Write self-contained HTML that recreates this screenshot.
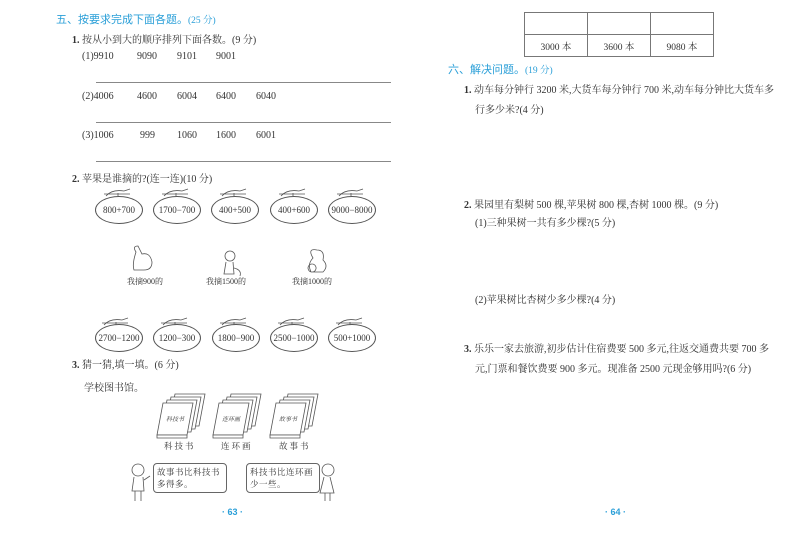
<!DOCTYPE html>
<html><head><meta charset="utf-8"><style>
body{margin:0;width:800px;height:534px;background:#fff;position:relative;overflow:hidden;font-family:"Liberation Serif","Noto Serif CJK SC",serif;color:#333;font-size:10px}
.a{position:absolute;white-space:nowrap}
.h{color:#2a9fd8;font-family:"Liberation Sans","Noto Sans CJK SC",sans-serif;font-size:11px}
.h span{font-family:"Liberation Serif","Noto Serif CJK SC",serif;font-size:9.5px}
.ln{position:absolute;height:1px;background:#888}
.ov{position:absolute;border:1px solid #555;border-radius:50%;width:46px;height:26px;text-align:center;line-height:26px;font-size:9px}
table{border-collapse:collapse}
td{border:1px solid #777;width:60px;height:19px;text-align:center;font-size:9.5px}
.bub{position:absolute;border:1px solid #666;border-radius:4px;font-size:8.5px;line-height:12px;padding:2px 3px;letter-spacing:0.5px;white-space:nowrap;background:#fff}
.pg{color:#2a9fd8;font-family:"Liberation Sans",sans-serif;font-weight:bold;font-size:9px}
</style></head><body>
<div class="a h" style="left:56px;top:11px">五、按要求完成下面各题。<span>(25 分)</span></div>
<div class="a" style="left:72px;top:31px"><b>1.</b> 按从小到大的顺序排列下面各数。(9 分)</div>
<div class="a" style="left:82px;top:51px">(1)9910</div><div class="a" style="left:137px;top:51px">9090</div><div class="a" style="left:177px;top:51px">9101</div><div class="a" style="left:216px;top:51px">9001</div>
<div class="ln" style="left:96px;top:82px;width:295px"></div>
<div class="a" style="left:82px;top:91px">(2)4006</div><div class="a" style="left:137px;top:91px">4600</div><div class="a" style="left:177px;top:91px">6004</div><div class="a" style="left:216px;top:91px">6400</div><div class="a" style="left:256px;top:91px">6040</div>
<div class="ln" style="left:96px;top:122px;width:295px"></div>
<div class="a" style="left:82px;top:130px">(3)1006</div><div class="a" style="left:140px;top:130px">999</div><div class="a" style="left:177px;top:130px">1060</div><div class="a" style="left:216px;top:130px">1600</div><div class="a" style="left:256px;top:130px">6001</div>
<div class="ln" style="left:96px;top:161px;width:295px"></div>
<div class="a" style="left:72px;top:170px"><b>2.</b> 苹果是谁摘的?(连一连)(10 分)</div>

<div class="ov" style="left:95px;top:196px">800+700</div>
<div class="ov" style="left:153px;top:196px">1700−700</div>
<div class="ov" style="left:211px;top:196px">400+500</div>
<div class="ov" style="left:270px;top:196px">400+600</div>
<div class="ov" style="left:328px;top:196px">9000−8000</div>
<svg class="a" style="left:0;top:0" width="400" height="534">
<g fill="none" stroke="#555" stroke-width="0.8">
<path id="b" d="M106 196 q6-7 18-5 l6-2 M104 194 l26 0 M118 196 l0 -3"/>
<use href="#b" x="58"/><use href="#b" x="116"/><use href="#b" x="175"/><use href="#b" x="233"/>
<use href="#b" x="-2" y="129"/><use href="#b" x="57" y="129"/><use href="#b" x="116" y="129"/><use href="#b" x="174" y="129"/><use href="#b" x="232" y="129"/>
<path d="M136 252 q-4-6 2-6 l4 8 q8-2 10 8 q0 8-8 8 l-10 0 q-2-6 2-18z"/>
<circle cx="230" cy="256" r="5"/><path d="M226 262 l-2 12 l10 0 l-1-12 M234 268 q8 2 6 8"/>
<path d="M313 258 q-6-10 4-8 q8 0 6 10 q6 6 0 12 l-12 0 q-4-8 2-14z M312 264 a4 4 0 1 0 0.1 0"/>
<g id="bk" fill="#fff">
<path d="M175 394 l30 -0 l-6 32 l-30 0z"/><path d="M171 397 l30 0 l-6 32 l-30 0z"/><path d="M167 400 l30 0 l-6 32 l-30 0z"/>
<path d="M163 403 l30 0 l-6 32 l-30 0z"/><path d="M157 435 l30 0 l0 3 l-30 0z"/>
</g>
<use href="#bk" x="56"/><use href="#bk" x="113"/>
<circle cx="138" cy="470" r="6"/><path d="M134 477 l-2 14 l12 0 l-1-14 M135 491 l0 10 M141 491 l0 10 M144 480 l6-4"/>
<circle cx="328" cy="470" r="6"/><path d="M324 477 l-4 16 l14 0 l-4-16 M325 493 l0 8 M330 493 l0 8"/>
</g></svg>
<div class="a" style="left:166px;top:414px;font-size:6px;font-style:italic">科技书</div>
<div class="a" style="left:222px;top:414px;font-size:6px;font-style:italic">连环画</div>
<div class="a" style="left:279px;top:414px;font-size:6px;font-style:italic">故事书</div>
<div class="a" style="left:127px;top:276px;font-size:8px">我摘900的</div>
<div class="a" style="left:206px;top:276px;font-size:8px">我摘1500的</div>
<div class="a" style="left:292px;top:276px;font-size:8px">我摘1000的</div>

<div class="ov" style="left:95px;top:324px">2700−1200</div>
<div class="ov" style="left:153px;top:324px">1200−300</div>
<div class="ov" style="left:212px;top:324px">1800−900</div>
<div class="ov" style="left:270px;top:324px">2500−1000</div>
<div class="ov" style="left:328px;top:324px">500+1000</div>
<div class="a" style="left:72px;top:356px"><b>3.</b> 猜一猜,填一填。(6 分)</div>
<div class="a" style="left:84px;top:379px">学校图书馆。</div>
<div class="a" style="left:164px;top:440px;font-size:8.5px;letter-spacing:2px">科技书</div>
<div class="a" style="left:221px;top:440px;font-size:8.5px;letter-spacing:2px">连环画</div>
<div class="a" style="left:279px;top:440px;font-size:8.5px;letter-spacing:2px">故事书</div>
<div class="bub" style="left:153px;top:463px;width:66px">故事书比科技书<br>多得多。</div>
<div class="bub" style="left:246px;top:463px;width:66px">科技书比连环画<br>少一些。</div>
<div class="a pg" style="left:222px;top:507px">· 63 ·</div>

<table class="a" style="left:524px;top:12px"><tr><td></td><td></td><td></td></tr><tr><td>3000 本</td><td>3600 本</td><td>9080 本</td></tr></table>
<div class="a h" style="left:448px;top:61px">六、解决问题。<span>(19 分)</span></div>
<div class="a" style="left:464px;top:81px"><b>1.</b> 动车每分钟行 3200 米,大货车每分钟行 700 米,动车每分钟比大货车多</div>
<div class="a" style="left:475px;top:101px">行多少米?(4 分)</div>
<div class="a" style="left:464px;top:196px"><b>2.</b> 果园里有梨树 500 棵,苹果树 800 棵,杏树 1000 棵。(9 分)</div>
<div class="a" style="left:475px;top:214px">(1)三种果树一共有多少棵?(5 分)</div>
<div class="a" style="left:475px;top:291px">(2)苹果树比杏树少多少棵?(4 分)</div>
<div class="a" style="left:464px;top:340px"><b>3.</b> 乐乐一家去旅游,初步估计住宿费要 500 多元,往返交通费共要 700 多</div>
<div class="a" style="left:475px;top:360px">元,门票和餐饮费要 900 多元。现准备 2500 元现金够用吗?(6 分)</div>
<div class="a pg" style="left:605px;top:507px">· 64 ·</div>
</body></html>
